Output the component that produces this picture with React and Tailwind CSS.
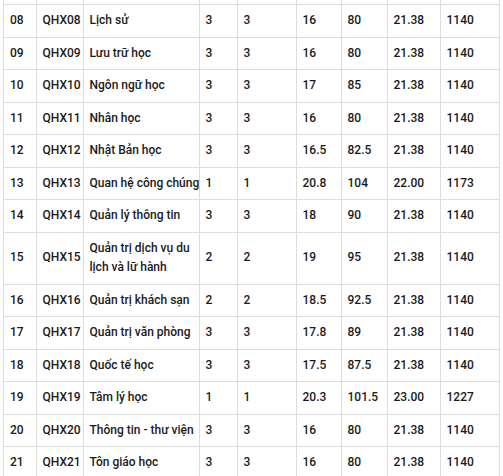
import React from "react";

const rows = [
  ["08", "QHX08", "Lịch sử", "3", "3", "16", "80", "21.38", "1140"],
  ["09", "QHX09", "Lưu trữ học", "3", "3", "16", "80", "21.38", "1140"],
  ["10", "QHX10", "Ngôn ngữ học", "3", "3", "17", "85", "21.38", "1140"],
  ["11", "QHX11", "Nhân học", "3", "3", "16", "80", "21.38", "1140"],
  ["12", "QHX12", "Nhật Bản học", "3", "3", "16.5", "82.5", "21.38", "1140"],
  ["13", "QHX13", "Quan hệ công chúng", "1", "1", "20.8", "104", "22.00", "1173"],
  ["14", "QHX14", "Quản lý thông tin", "3", "3", "18", "90", "21.38", "1140"],
  ["15", "QHX15", null, "2", "2", "19", "95", "21.38", "1140"],
  ["16", "QHX16", "Quản trị khách sạn", "2", "2", "18.5", "92.5", "21.38", "1140"],
  ["17", "QHX17", "Quản trị văn phòng", "3", "3", "17.8", "89", "21.38", "1140"],
  ["18", "QHX18", "Quốc tế học", "3", "3", "17.5", "87.5", "21.38", "1140"],
  ["19", "QHX19", "Tâm lý học", "1", "1", "20.3", "101.5", "23.00", "1227"],
  ["20", "QHX20", "Thông tin - thư viện", "3", "3", "16", "80", "21.38", "1140"],
  ["21", "QHX21", "Tôn giáo học", "3", "3", "16", "80", "21.38", "1140"],
];

const cell =
  "border border-[#dcdcdc] py-[6px] pl-[6px] pr-[2px] align-middle whitespace-nowrap overflow-hidden";

export default function App() {
  return (
    <div className="w-[503px] h-[476px] overflow-hidden bg-white">
      <table className="ml-[3px] mt-[-1px] table-fixed border-collapse w-[496px] text-[12px] font-medium text-[#1a1a1a] leading-[19.5px] font-['Roboto',sans-serif]">
        <colgroup>
          <col className="w-[32.5px]" />
          <col className="w-[47px]" />
          <col className="w-[116px]" />
          <col className="w-[38px]" />
          <col className="w-[59px]" />
          <col className="w-[45px]" />
          <col className="w-[46px]" />
          <col className="w-[53px]" />
          <col className="w-[59px]" />
        </colgroup>
        <tbody>
          <tr className="h-[5px]">
            {Array.from({ length: 9 }).map((_, i) => (
              <td key={i} className="border border-[#dcdcdc] p-0 h-[5px]" />
            ))}
          </tr>
          {rows.map((r) => (
            <tr key={r[0]}>
              {r.map((c, i) => (
                <td key={i} className={cell}>
                  {c === null ? (
                    <>
                      Quản trị dịch vụ du
                      <br />
                      lịch và lữ hành
                    </>
                  ) : (
                    c
                  )}
                </td>
              ))}
            </tr>
          ))}
        </tbody>
      </table>
    </div>
  );
}
